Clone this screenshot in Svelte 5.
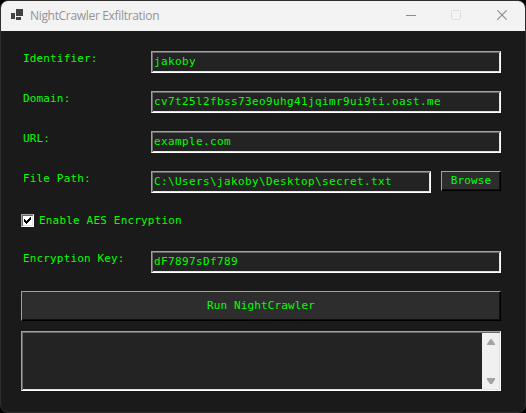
<script>
  let identifier = $state('jakoby');
  let domain = $state('cv7t25l2fbss73eo9uhg41jqimr9ui9ti.oast.me');
  let url = $state('example.com');
  let path = $state('C:\\Users\\jakoby\\Desktop\\secret.txt');
  let key = $state('dF7897sDf789');
  let aes = $state(true);
</script>

<div class="desktop">
  <main class="window">
    <header>
      <svg class="app-icon" width="12" height="11" viewBox="0 0 12 11" shape-rendering="crispEdges">
        <path fill="#424242" d="M5 0h7v7H5zM0 4h4v6H0zM5 8h5v3H5z" />
      </svg>
      <h1>NightCrawler Exfiltration</h1>
      <div class="controls">
        <svg class="minimize" width="10" height="10" viewBox="0 0 10 10"><path d="M0 5.5h10" stroke="#8c8c8c" /></svg>
        <svg width="10" height="10" viewBox="0 0 10 10"><rect x=".5" y=".5" width="9" height="9" rx="1" fill="none" stroke="#dedede" /></svg>
        <svg width="10" height="10" viewBox="0 0 10 10"><path d="M.3.3l9.4 9.4M9.7.3L.3 9.7" stroke="#8c8c8c" stroke-width="1.1" /></svg>
      </div>
    </header>

    <form>
      <div class="row"><label for="id">Identifier:</label><input id="id" type="text" spellcheck="false" bind:value={identifier} /></div>
      <div class="row"><label for="domain">Domain:</label><input id="domain" type="text" spellcheck="false" bind:value={domain} /></div>
      <div class="row"><label for="url">URL:</label><input id="url" type="text" spellcheck="false" bind:value={url} /></div>
      <div class="row">
        <label for="path">File Path:</label><input id="path" type="text" spellcheck="false" bind:value={path} />
        <button type="button" class="browse">Browse</button>
      </div>
      <label class="check">
        <input type="checkbox" bind:checked={aes} />
        <span class="box">
          {#if aes}
            <svg width="7" height="7" viewBox="0 0 7 7" shape-rendering="crispEdges">
              <path fill="#000" d="M0 2h1v3H0zM1 3h1v3H1zM2 4h1v3H2zM3 3h1v3H3zM4 2h1v3H4zM5 1h1v3H5zM6 0h1v3H6z" />
            </svg>
          {/if}
        </span>
        <span class="caption">Enable AES Encryption</span>
      </label>
      <div class="row"><label for="key">Encryption Key:</label><input id="key" type="text" spellcheck="false" bind:value={key} /></div>
      <button type="button" class="run">Run NightCrawler</button>
      <div class="output">
        <div class="log"></div>
        <div class="scrollbar">
          <svg width="8" height="7" viewBox="0 0 8 7"><path fill="#a3a3a3" d="M3.2.3h1.6L8 5v1H0V5z" /></svg>
          <svg width="8" height="7" viewBox="0 0 8 7"><path fill="#a3a3a3" d="M0 0h8v1.5L5 6H3L0 1.5z" /></svg>
        </div>
      </div>
    </form>
  </main>
</div>

<style>
  .desktop {
    width: 526px;
    height: 413px;
    background: #000;
    overflow: hidden;
  }
  .window {
    box-sizing: border-box;
    width: 526px;
    height: 413px;
    border: 1px solid #2e2e2e;
    border-radius: 8px;
    background: #1a1a1a;
    overflow: hidden;
  }
  header {
    display: flex;
    align-items: center;
    height: 30px;
    padding: 0 18px 0 10px;
    background: #f3f3f3;
  }
  .app-icon {
    margin-top: -3px;
  }
  h1 {
    flex: 1;
    margin: 0 0 0 7px;
    font: 400 12px/16px 'Open Sans', sans-serif;
    letter-spacing: -0.32px;
    color: #949494;
    white-space: nowrap;
  }
  .controls {
    display: flex;
    gap: 36px;
    margin-top: -2px;
  }
  .minimize {
    margin-right: -1px;
  }
  svg {
    display: block;
  }
  form {
    display: flex;
    flex-direction: column;
    padding: 20px 24px 0 20px;
    color: #0f0;
    font: 11px/14px 'DejaVu Sans Mono', monospace;
    letter-spacing: 0.15px;
  }
  .row {
    display: flex;
    height: 22px;
    margin-bottom: 18px;
  }
  .row label {
    width: 130px;
    padding: 1px 0 0 2px;
    box-sizing: border-box;
    white-space: nowrap;
  }
  .row input {
    flex: 1;
    min-width: 0;
    box-sizing: border-box;
    height: 22px;
    margin: 0;
    padding: 0 1px 1px 2px;
    border: 1px solid;
    border-color: #a0a0a0 #fff #fff #a0a0a0;
    border-radius: 0;
    outline: 0;
    background: #232323;
    box-shadow: inset 1px 1px #696969, inset -1px -1px #e3e3e3;
    color: #0f0;
    font: inherit;
    letter-spacing: 0.378px;
  }
  button {
    box-sizing: border-box;
    margin: 0;
    padding: 0;
    border: 1px solid;
    border-color: #a0a0a0 #000 #000 #a0a0a0;
    border-radius: 0;
    background: #2d2d2d;
    box-shadow: inset -1px -1px #101010;
    color: #0f0;
    font: inherit;
    letter-spacing: 0.13px;
  }
  .browse {
    width: 60px;
    height: 20px;
    margin-left: 10px;
  }
  .check {
    display: flex;
    align-items: center;
    height: 14px;
    margin: 2px 0 24px;
  }
  .check input {
    position: absolute;
    opacity: 0;
    pointer-events: none;
  }
  .box {
    box-sizing: border-box;
    width: 13px;
    height: 13px;
    margin: 1px 5px 0 0;
    padding: 2px;
    border: 1px solid;
    border-color: #a0a0a0 #fff #fff #a0a0a0;
    background: #fff;
    box-shadow: inset 1px 1px #696969, inset -1px -1px #e3e3e3;
  }
  .caption {
    padding-top: 2px;
    letter-spacing: 0.18px;
  }
  .run {
    height: 30px;
    margin-bottom: 10px;
  }
  .output {
    box-sizing: border-box;
    display: flex;
    height: 60px;
    border: 1px solid;
    border-color: #a0a0a0 #fff #fff #a0a0a0;
    background: #232323;
    box-shadow: inset 1px 1px #696969, inset -1px -1px #e3e3e3;
    padding: 1px;
  }
  .log {
    flex: 1;
  }
  .scrollbar {
    box-sizing: border-box;
    width: 17px;
    padding: 6px 4px 4px 5px;
    background: #f0f0f0;
    display: flex;
    flex-direction: column;
    justify-content: space-between;
  }
</style>
